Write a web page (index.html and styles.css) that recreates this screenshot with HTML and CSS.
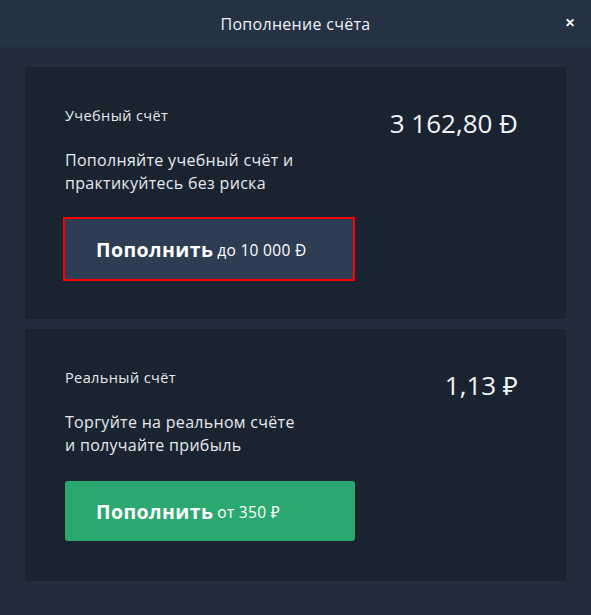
FILE: index.html
```html
<!DOCTYPE html>
<html lang="ru">

<head>
    <meta charset="UTF-8">
    <meta name="viewport" content="width=device-width, initial-scale=1.0">
    <title>Пополнение счёта</title>
    <link rel="stylesheet" href="styles.css">
</head>

<body>
    <div class="modal">
        <div class="modal-head">
            <span class="modal-title">Пополнение счёта</span>
            <span class="modal-close">&#x2715;</span>
        </div>

        <div class="modal-body">
            <div class="card">
                <div class="card-info">
                    <div class="card-label">Учебный счёт</div>
                    <div class="card-text">Пополняйте учебный счёт и<br>практикуйтесь без риска</div>
                    <button class="btn btn-demo">
                        <b>Пополнить</b> <span>до 10 000 Đ</span>
                    </button>
                </div>
                <div class="card-amount">3 162,80 Đ</div>
            </div>

            <div class="card">
                <div class="card-info">
                    <div class="card-label">Реальный счёт</div>
                    <div class="card-text">Торгуйте на реальном счёте<br>и получайте прибыль</div>
                    <button class="btn btn-real">
                        <b>Пополнить</b> <span>от 350 ₽</span>
                    </button>
                </div>
                <div class="card-amount">1,13 ₽</div>
            </div>
        </div>
    </div>
</body>

</html>
```

FILE: styles.css
```css
body {
    margin: 0;
    background: #212d3c;
    font-family: "Open Sans", "Noto Sans", sans-serif;
    color: #e6e9ed;
}

.modal {
    width: 591px;
    height: 615px;
}

.modal-head {
    height: 47px;
    background: #253244;
    display: flex;
    align-items: center;
    justify-content: center;
    position: relative;
}

.modal-title {
    font-size: 16px;
    letter-spacing: 0.3px;
    color: #eef1f4;
}

.modal-close {
    position: absolute;
    right: 16px;
    top: 14px;
    font-size: 12px;
    font-weight: bold;
    color: #ffffff;
}

.modal-body {
    padding: 20px 25px;
    display: flex;
    flex-direction: column;
    gap: 10px;
}

.card {
    background: #1a2431;
    height: 252px;
    box-sizing: border-box;
    padding: 40px 48px 40px 40px;
    display: flex;
    justify-content: space-between;
}

.card-label {
    font-size: 14.5px;
    letter-spacing: 0.4px;
    line-height: 18px;
}

.card-text {
    margin-top: 24px;
    font-size: 16px;
    letter-spacing: 0.3px;
    line-height: 23px;
}

.card-amount {
    font-size: 26px;
    line-height: 30px;
    margin-top: 1px;
    color: #f2f4f6;
}

.btn {
    margin-top: 24px;
    width: 290px;
    height: 60px;
    border: none;
    border-radius: 3px;
    padding: 0 0 0 31px;
    text-align: left;
    font-family: "Open Sans", "Noto Sans", sans-serif;
    color: #ffffff;
    display: flex;
    align-items: center;
    gap: 4px;
}

.btn b {
    font-size: 19.5px;
    letter-spacing: 0.4px;
    font-weight: 700;
}

.btn span {
    font-size: 15.5px;
    letter-spacing: 0.3px;
    margin-top: 2px;
}

.btn-demo {
    width: 288px;
    background: #2e3d53;
    border-radius: 0;
    outline: 2px solid #ff0000;
}

.btn-real {
    background: #2ba86f;
}
```
